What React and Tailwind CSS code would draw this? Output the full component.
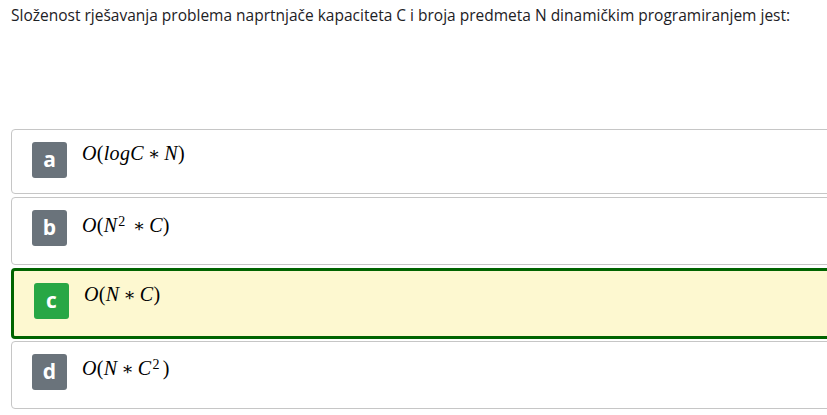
import React from "react";

const mathFont = { fontFamily: '"Liberation Serif", "DejaVu Serif", serif' };

function I({ children }) {
  return <span className="italic">{children}</span>;
}
function Op() {
  return <span className="mx-[0.22em] not-italic text-[0.9em]" style={{ fontFamily: '"DejaVu Serif", serif' }}>∗</span>;
}
function Sup({ children }) {
  return <span className="relative -top-[0.45em] ml-[1px] mr-[3px] text-[0.7em] not-italic">{children}</span>;
}

function Card({ letter, correct, h, mt, children }) {
  return (
    <div
      className={
        "flex w-[830px] rounded-[4px] pl-5 pt-3 " +
        (correct
          ? "border-[3px] border-[#006400] bg-[#fdf8d0]"
          : "border border-[#c6c6c6] bg-white")
      }
      style={{ height: h, marginTop: mt }}
    >
      <div
        className={
          "flex h-[36px] w-[35px] shrink-0 items-center justify-center rounded-[3px] text-[21px] font-bold text-white " +
          (correct ? "bg-[#28a745]" : "bg-[#6a737b]")
        }
        style={{ fontFamily: '"Open Sans", sans-serif' }}
      >
        {letter}
      </div>
      <div className="ml-[15px] text-[20px] leading-[22px] tracking-[0.3px] text-black" style={mathFont}>
        {children}
      </div>
    </div>
  );
}

export default function App() {
  return (
    <div className="h-[415px] w-[827px] overflow-hidden bg-white pl-[11px]">
      <div
        className="pt-[4px] text-[15.5px] leading-[22px] text-[#1d2125]"
        style={{ fontFamily: '"Open Sans", sans-serif' }}
      >
        Složenost rješavanja problema naprtnjače kapaciteta C i broja predmeta N dinamičkim programiranjem jest:
      </div>
      <div className="mt-[103px]">
        <Card letter="a" h={65} mt={0}>
          <span>
            <I>O</I>(<I>logC</I>
            <Op />
            <I>N</I>)
          </span>
        </Card>
        <Card letter="b" h={68} mt={3}>
          <span className="inline-block pt-[4px]">
            <I>O</I>(<I>N</I>
            <Sup>2</Sup>
            <Op />
            <I>C</I>)
          </span>
        </Card>
        <Card letter="c" correct h={71} mt={3}>
          <span>
            <I>O</I>(<I>N</I>
            <Op />
            <I>C</I>)
          </span>
        </Card>
        <Card letter="d" h={68} mt={2}>
          <span className="inline-block pt-[3px]">
            <I>O</I>(<I>N</I>
            <Op />
            <I>C</I>
            <Sup>2</Sup>)
          </span>
        </Card>
      </div>
    </div>
  );
}
